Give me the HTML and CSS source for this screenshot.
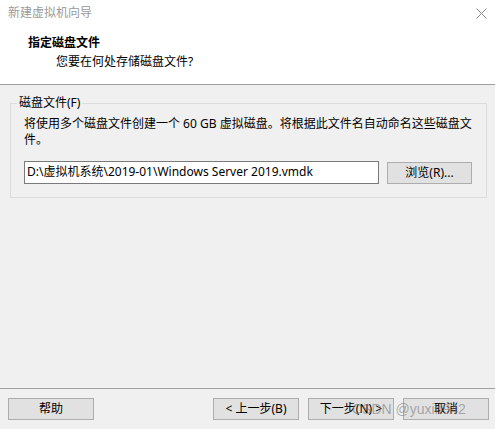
FILE: index.html
```html
<!DOCTYPE html>
<html lang="zh-CN">
<head>
<meta charset="utf-8">
<title>新建虚拟机向导</title>
<link rel="stylesheet" href="styles.css">
</head>
<body>
<div class="window">
  <header class="header">
    <div class="titlebar">
      <span class="title">新建虚拟机向导</span>
      <svg class="close" width="11" height="11" viewBox="0 0 11 11"><path d="M0.5 0.5 L10.5 10.5 M10.5 0.5 L0.5 10.5" stroke="#8a8a8a" stroke-width="1" fill="none"/></svg>
    </div>
    <div class="heading">指定磁盘文件</div>
    <div class="subheading">您要在何处存储磁盘文件?</div>
  </header>
  <main class="content">
    <fieldset class="group">
      <legend class="legend">磁盘文件(F)</legend>
      <p class="desc"><span class="line">将使用多个磁盘文件创建一个 60 GB 虚拟磁盘。将根据此文件名自动命名这些磁盘文</span><span class="line">件。</span></p>
      <div class="pathrow">
        <div class="input">D:\虚拟机系统\2019-01\Windows Server 2019.vmdk</div>
        <div class="btn browse">浏览(R)...</div>
      </div>
    </fieldset>
    <footer class="footer">
      <div class="btn">帮助</div>
      <div class="navbtns">
        <div class="btn">&lt; 上一步(B)</div>
        <div class="btn">下一步(N) &gt;</div>
        <div class="btn">取消</div>
      </div>
      <span class="watermark">CSDN @yuxin942</span>
    </footer>
  </main>
</div>
</body>
</html>
```
FILE: styles.css
```css
* { box-sizing: border-box; }
html, body { margin: 0; padding: 0; }
body {
  width: 495px;
  height: 429px;
  overflow: hidden;
  background: #f0f0f0;
  font-family: "Noto Sans", "Noto Sans CJK SC", sans-serif;
  font-size: 12px;
  color: #000;
}
.window {
  display: flex;
  flex-direction: column;
  height: 429px;
}
.header {
  background: #fff;
  height: 85px;
  border-bottom: 1px solid #a0a0a0;
}
.titlebar {
  height: 26px;
  display: flex;
  align-items: center;
  justify-content: space-between;
  padding: 0 8px 0 8px;
}
.title {
  color: #9a9a9a;
  line-height: 16px;
}
.close { margin-right: 0; }
.heading {
  font-weight: bold;
  line-height: 16px;
  margin: 9px 0 0 28px;
}
.subheading {
  line-height: 16px;
  margin: 3px 0 0 56px;
}
.content {
  flex: 1;
  display: flex;
  flex-direction: column;
  position: relative;
}
.group {
  margin: 10px 8px 0 10px;
  padding: 5px 13px 13px 13px;
  border: 1px solid #dcdcdc;
  min-width: 0;
}
.legend {
  padding: 0 2px;
  margin-left: -7px;
  line-height: 16px;
}
.desc {
  margin: 0;
  line-height: 16px;
}
.line {
  display: block;
  white-space: nowrap;
}
.pathrow {
  display: flex;
  align-items: flex-start;
  gap: 8px;
  margin-top: 13px;
}
.input {
  width: 355px;
  height: 23px;
  border: 1px solid #7a7a7a;
  background: #fff;
  padding: 0 2px;
  line-height: 20px;
  white-space: nowrap;
  overflow: hidden;
}
.btn {
  width: 86px;
  height: 22px;
  border: 1px solid #adadad;
  background: #e1e1e1;
  display: flex;
  align-items: center;
  justify-content: center;
  line-height: 16px;
  white-space: nowrap;
}
.browse {
  width: 85px;
  margin-top: 1px;
}
.footer {
  margin-top: auto;
  border-top: 1px solid #a0a0a0;
  height: 41px;
  padding: 9px 6px 0 8px;
  display: flex;
  justify-content: space-between;
  align-items: flex-start;
  position: relative;
}
.navbtns {
  display: flex;
  gap: 9px;
}
.watermark {
  position: absolute;
  left: 352px;
  top: 12px;
  font-family: "Liberation Sans", sans-serif;
  font-size: 14px;
  line-height: 16px;
  color: rgba(110, 110, 110, 0.55);
  pointer-events: none;
  white-space: nowrap;
}
```
